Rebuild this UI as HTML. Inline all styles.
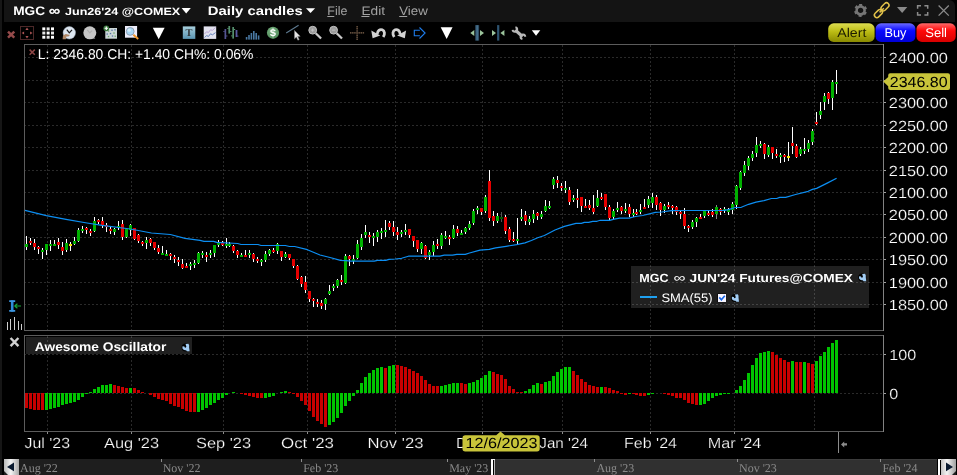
<!DOCTYPE html>
<html><head><meta charset="utf-8"><title>MGC Daily candles</title>
<style>
html,body{margin:0;padding:0;background:#000;}
body{width:957px;height:475px;position:relative;overflow:hidden;font-family:"Liberation Sans",sans-serif;color:#fff;}
#edge{position:absolute;left:0;top:0;width:2px;height:475px;background:#161616}
#title{position:absolute;left:4px;top:0;width:951px;height:22px;background:#141414;border-top-right-radius:6px}
</style></head><body>
<div id="edge"></div>
<div id="title"></div>
<svg width="957" height="475" viewBox="0 0 957 475" style="position:absolute;left:0;top:0" shape-rendering="crispEdges">
<line x1="47.5" y1="45" x2="47.5" y2="330" stroke="#2a2a2a" stroke-dasharray="2 2"/>
<line x1="47.5" y1="336" x2="47.5" y2="431" stroke="#2a2a2a" stroke-dasharray="2 2"/>
<line x1="131.5" y1="45" x2="131.5" y2="330" stroke="#2a2a2a" stroke-dasharray="2 2"/>
<line x1="131.5" y1="336" x2="131.5" y2="431" stroke="#2a2a2a" stroke-dasharray="2 2"/>
<line x1="223.5" y1="45" x2="223.5" y2="330" stroke="#2a2a2a" stroke-dasharray="2 2"/>
<line x1="223.5" y1="336" x2="223.5" y2="431" stroke="#2a2a2a" stroke-dasharray="2 2"/>
<line x1="307.5" y1="45" x2="307.5" y2="330" stroke="#2a2a2a" stroke-dasharray="2 2"/>
<line x1="307.5" y1="336" x2="307.5" y2="431" stroke="#2a2a2a" stroke-dasharray="2 2"/>
<line x1="395.5" y1="45" x2="395.5" y2="330" stroke="#2a2a2a" stroke-dasharray="2 2"/>
<line x1="395.5" y1="336" x2="395.5" y2="431" stroke="#2a2a2a" stroke-dasharray="2 2"/>
<line x1="482.5" y1="45" x2="482.5" y2="330" stroke="#2a2a2a" stroke-dasharray="2 2"/>
<line x1="482.5" y1="336" x2="482.5" y2="431" stroke="#2a2a2a" stroke-dasharray="2 2"/>
<line x1="562.5" y1="45" x2="562.5" y2="330" stroke="#2a2a2a" stroke-dasharray="2 2"/>
<line x1="562.5" y1="336" x2="562.5" y2="431" stroke="#2a2a2a" stroke-dasharray="2 2"/>
<line x1="650.5" y1="45" x2="650.5" y2="330" stroke="#2a2a2a" stroke-dasharray="2 2"/>
<line x1="650.5" y1="336" x2="650.5" y2="431" stroke="#2a2a2a" stroke-dasharray="2 2"/>
<line x1="734.5" y1="45" x2="734.5" y2="330" stroke="#2a2a2a" stroke-dasharray="2 2"/>
<line x1="734.5" y1="336" x2="734.5" y2="431" stroke="#2a2a2a" stroke-dasharray="2 2"/>
<line x1="814.5" y1="45" x2="814.5" y2="330" stroke="#2a2a2a" stroke-dasharray="2 2"/>
<line x1="814.5" y1="336" x2="814.5" y2="431" stroke="#2a2a2a" stroke-dasharray="2 2"/>
<line x1="24" y1="57.5" x2="883" y2="57.5" stroke="#2a2a2a" stroke-dasharray="2 2"/>
<line x1="884" y1="57.5" x2="886" y2="57.5" stroke="#a0a0a0"/>
<line x1="24" y1="80.5" x2="883" y2="80.5" stroke="#2a2a2a" stroke-dasharray="2 2"/>
<line x1="884" y1="80.5" x2="886" y2="80.5" stroke="#a0a0a0"/>
<line x1="24" y1="102.5" x2="883" y2="102.5" stroke="#2a2a2a" stroke-dasharray="2 2"/>
<line x1="884" y1="102.5" x2="886" y2="102.5" stroke="#a0a0a0"/>
<line x1="24" y1="125.5" x2="883" y2="125.5" stroke="#2a2a2a" stroke-dasharray="2 2"/>
<line x1="884" y1="125.5" x2="886" y2="125.5" stroke="#a0a0a0"/>
<line x1="24" y1="147.5" x2="883" y2="147.5" stroke="#2a2a2a" stroke-dasharray="2 2"/>
<line x1="884" y1="147.5" x2="886" y2="147.5" stroke="#a0a0a0"/>
<line x1="24" y1="170.5" x2="883" y2="170.5" stroke="#2a2a2a" stroke-dasharray="2 2"/>
<line x1="884" y1="170.5" x2="886" y2="170.5" stroke="#a0a0a0"/>
<line x1="24" y1="192.5" x2="883" y2="192.5" stroke="#2a2a2a" stroke-dasharray="2 2"/>
<line x1="884" y1="192.5" x2="886" y2="192.5" stroke="#a0a0a0"/>
<line x1="24" y1="214.5" x2="883" y2="214.5" stroke="#2a2a2a" stroke-dasharray="2 2"/>
<line x1="884" y1="214.5" x2="886" y2="214.5" stroke="#a0a0a0"/>
<line x1="24" y1="237.5" x2="883" y2="237.5" stroke="#2a2a2a" stroke-dasharray="2 2"/>
<line x1="884" y1="237.5" x2="886" y2="237.5" stroke="#a0a0a0"/>
<line x1="24" y1="259.5" x2="883" y2="259.5" stroke="#2a2a2a" stroke-dasharray="2 2"/>
<line x1="884" y1="259.5" x2="886" y2="259.5" stroke="#a0a0a0"/>
<line x1="24" y1="282.5" x2="883" y2="282.5" stroke="#2a2a2a" stroke-dasharray="2 2"/>
<line x1="884" y1="282.5" x2="886" y2="282.5" stroke="#a0a0a0"/>
<line x1="24" y1="304.5" x2="883" y2="304.5" stroke="#2a2a2a" stroke-dasharray="2 2"/>
<line x1="884" y1="304.5" x2="886" y2="304.5" stroke="#a0a0a0"/>
<line x1="24" y1="354.5" x2="883" y2="354.5" stroke="#2a2a2a" stroke-dasharray="2 2"/>
<line x1="884" y1="354.5" x2="886" y2="354.5" stroke="#a0a0a0"/>
<line x1="24" y1="393.5" x2="883" y2="393.5" stroke="#2a2a2a" stroke-dasharray="2 2"/>
<line x1="884" y1="393.5" x2="886" y2="393.5" stroke="#a0a0a0"/>
<rect x="26" y="236" width="1" height="14" fill="#fff"/>
<rect x="25" y="244" width="3" height="3" fill="#00b000"/>
<rect x="30" y="238" width="1" height="7" fill="#fff"/>
<rect x="29" y="241" width="3" height="2" fill="#e60000"/>
<rect x="34" y="239" width="1" height="11" fill="#fff"/>
<rect x="33" y="243" width="3" height="4" fill="#e60000"/>
<rect x="38" y="246" width="1" height="8" fill="#fff"/>
<rect x="37" y="247" width="3" height="2" fill="#e60000"/>
<rect x="42" y="248" width="1" height="11" fill="#fff"/>
<rect x="41" y="250" width="3" height="2" fill="#00b000"/>
<rect x="46" y="244" width="1" height="11" fill="#fff"/>
<rect x="45" y="244" width="3" height="6" fill="#00b000"/>
<rect x="50" y="240" width="1" height="11" fill="#fff"/>
<rect x="49" y="244" width="3" height="2" fill="#00b000"/>
<rect x="54" y="240" width="1" height="6" fill="#fff"/>
<rect x="53" y="244" width="3" height="2" fill="#00b000"/>
<rect x="58" y="238" width="1" height="11" fill="#fff"/>
<rect x="57" y="242" width="3" height="3" fill="#e60000"/>
<rect x="62" y="242" width="1" height="13" fill="#fff"/>
<rect x="61" y="247" width="3" height="4" fill="#e60000"/>
<rect x="66" y="239" width="1" height="13" fill="#fff"/>
<rect x="65" y="243" width="3" height="7" fill="#00b000"/>
<rect x="70" y="242" width="1" height="9" fill="#fff"/>
<rect x="69" y="244" width="3" height="2" fill="#f0e000"/>
<rect x="74" y="237" width="1" height="8" fill="#fff"/>
<rect x="73" y="241" width="3" height="3" fill="#00b000"/>
<rect x="78" y="228" width="1" height="14" fill="#fff"/>
<rect x="77" y="230" width="3" height="11" fill="#00b000"/>
<rect x="82" y="226" width="1" height="7" fill="#fff"/>
<rect x="81" y="229" width="3" height="2" fill="#00b000"/>
<rect x="86" y="227" width="1" height="7" fill="#fff"/>
<rect x="85" y="228" width="3" height="2" fill="#e60000"/>
<rect x="90" y="229" width="1" height="7" fill="#fff"/>
<rect x="89" y="231" width="3" height="2" fill="#e60000"/>
<rect x="94" y="217" width="1" height="15" fill="#fff"/>
<rect x="93" y="221" width="3" height="10" fill="#00b000"/>
<rect x="98" y="219" width="1" height="5" fill="#fff"/>
<rect x="97" y="220" width="3" height="2" fill="#e60000"/>
<rect x="102" y="217" width="1" height="11" fill="#fff"/>
<rect x="101" y="221" width="3" height="4" fill="#e60000"/>
<rect x="106" y="223" width="1" height="9" fill="#fff"/>
<rect x="105" y="225" width="3" height="2" fill="#e60000"/>
<rect x="110" y="226" width="1" height="8" fill="#fff"/>
<rect x="109" y="229" width="3" height="2" fill="#e60000"/>
<rect x="114" y="228" width="1" height="7" fill="#fff"/>
<rect x="113" y="229" width="3" height="3" fill="#00b000"/>
<rect x="118" y="221" width="1" height="9" fill="#fff"/>
<rect x="117" y="226" width="3" height="2" fill="#00b000"/>
<rect x="122" y="220" width="1" height="20" fill="#fff"/>
<rect x="121" y="224" width="3" height="13" fill="#e60000"/>
<rect x="126" y="229" width="1" height="9" fill="#fff"/>
<rect x="125" y="229" width="3" height="8" fill="#00b000"/>
<rect x="130" y="224" width="1" height="12" fill="#fff"/>
<rect x="129" y="225" width="3" height="5" fill="#00b000"/>
<rect x="134" y="228" width="1" height="12" fill="#fff"/>
<rect x="133" y="228" width="3" height="11" fill="#e60000"/>
<rect x="138" y="234" width="1" height="9" fill="#fff"/>
<rect x="137" y="235" width="3" height="6" fill="#e60000"/>
<rect x="142" y="241" width="1" height="5" fill="#fff"/>
<rect x="141" y="242" width="3" height="2" fill="#e60000"/>
<rect x="146" y="237" width="1" height="12" fill="#fff"/>
<rect x="145" y="240" width="3" height="3" fill="#00b000"/>
<rect x="150" y="238" width="1" height="8" fill="#fff"/>
<rect x="149" y="239" width="3" height="4" fill="#e60000"/>
<rect x="154" y="242" width="1" height="8" fill="#fff"/>
<rect x="153" y="242" width="3" height="6" fill="#e60000"/>
<rect x="158" y="245" width="1" height="9" fill="#fff"/>
<rect x="157" y="248" width="3" height="4" fill="#e60000"/>
<rect x="162" y="246" width="1" height="9" fill="#fff"/>
<rect x="161" y="253" width="3" height="2" fill="#00b000"/>
<rect x="166" y="250" width="1" height="6" fill="#fff"/>
<rect x="165" y="254" width="3" height="2" fill="#00b000"/>
<rect x="170" y="253" width="1" height="7" fill="#fff"/>
<rect x="169" y="254" width="3" height="2" fill="#e60000"/>
<rect x="174" y="255" width="1" height="8" fill="#fff"/>
<rect x="173" y="257" width="3" height="2" fill="#e60000"/>
<rect x="178" y="257" width="1" height="9" fill="#fff"/>
<rect x="177" y="260" width="3" height="2" fill="#e60000"/>
<rect x="182" y="259" width="1" height="10" fill="#fff"/>
<rect x="181" y="264" width="3" height="4" fill="#e60000"/>
<rect x="186" y="263" width="1" height="5" fill="#fff"/>
<rect x="185" y="266" width="3" height="2" fill="#e60000"/>
<rect x="190" y="262" width="1" height="8" fill="#fff"/>
<rect x="189" y="264" width="3" height="2" fill="#00b000"/>
<rect x="194" y="260" width="1" height="8" fill="#fff"/>
<rect x="193" y="263" width="3" height="2" fill="#00b000"/>
<rect x="198" y="252" width="1" height="12" fill="#fff"/>
<rect x="197" y="253" width="3" height="10" fill="#00b000"/>
<rect x="202" y="251" width="1" height="7" fill="#fff"/>
<rect x="201" y="253" width="3" height="2" fill="#00b000"/>
<rect x="206" y="252" width="1" height="10" fill="#fff"/>
<rect x="205" y="255" width="3" height="2" fill="#e60000"/>
<rect x="210" y="250" width="1" height="8" fill="#fff"/>
<rect x="209" y="253" width="3" height="2" fill="#00b000"/>
<rect x="214" y="245" width="1" height="12" fill="#fff"/>
<rect x="213" y="245" width="3" height="8" fill="#00b000"/>
<rect x="218" y="240" width="1" height="7" fill="#fff"/>
<rect x="217" y="243" width="3" height="2" fill="#00b000"/>
<rect x="222" y="241" width="1" height="5" fill="#fff"/>
<rect x="221" y="243" width="3" height="2" fill="#e60000"/>
<rect x="226" y="238" width="1" height="10" fill="#fff"/>
<rect x="225" y="244" width="3" height="2" fill="#00b000"/>
<rect x="229" y="242" width="1" height="5" fill="#fff"/>
<rect x="228" y="244" width="3" height="2" fill="#00b000"/>
<rect x="233" y="245" width="1" height="8" fill="#fff"/>
<rect x="232" y="246" width="3" height="5" fill="#e60000"/>
<rect x="237" y="250" width="1" height="8" fill="#fff"/>
<rect x="236" y="251" width="3" height="4" fill="#e60000"/>
<rect x="241" y="253" width="1" height="4" fill="#fff"/>
<rect x="240" y="255" width="3" height="2" fill="#00b000"/>
<rect x="245" y="250" width="1" height="7" fill="#fff"/>
<rect x="244" y="255" width="3" height="2" fill="#e60000"/>
<rect x="249" y="250" width="1" height="8" fill="#fff"/>
<rect x="248" y="253" width="3" height="2" fill="#00b000"/>
<rect x="253" y="253" width="1" height="9" fill="#fff"/>
<rect x="252" y="254" width="3" height="5" fill="#e60000"/>
<rect x="257" y="257" width="1" height="6" fill="#fff"/>
<rect x="256" y="259" width="3" height="2" fill="#e60000"/>
<rect x="261" y="259" width="1" height="7" fill="#fff"/>
<rect x="260" y="260" width="3" height="2" fill="#00b000"/>
<rect x="265" y="251" width="1" height="11" fill="#fff"/>
<rect x="264" y="254" width="3" height="6" fill="#00b000"/>
<rect x="269" y="249" width="1" height="7" fill="#fff"/>
<rect x="268" y="250" width="3" height="4" fill="#00b000"/>
<rect x="273" y="248" width="1" height="5" fill="#fff"/>
<rect x="272" y="250" width="3" height="2" fill="#e60000"/>
<rect x="277" y="243" width="1" height="11" fill="#fff"/>
<rect x="276" y="244" width="3" height="7" fill="#00b000"/>
<rect x="281" y="251" width="1" height="10" fill="#fff"/>
<rect x="280" y="251" width="3" height="6" fill="#e60000"/>
<rect x="285" y="252" width="1" height="6" fill="#fff"/>
<rect x="284" y="254" width="3" height="3" fill="#00b000"/>
<rect x="289" y="254" width="1" height="6" fill="#fff"/>
<rect x="288" y="254" width="3" height="4" fill="#e60000"/>
<rect x="293" y="259" width="1" height="9" fill="#fff"/>
<rect x="292" y="259" width="3" height="7" fill="#e60000"/>
<rect x="297" y="265" width="1" height="15" fill="#fff"/>
<rect x="296" y="266" width="3" height="13" fill="#e60000"/>
<rect x="301" y="276" width="1" height="11" fill="#fff"/>
<rect x="300" y="277" width="3" height="7" fill="#e60000"/>
<rect x="305" y="276" width="1" height="17" fill="#fff"/>
<rect x="304" y="282" width="3" height="8" fill="#e60000"/>
<rect x="309" y="291" width="1" height="11" fill="#fff"/>
<rect x="308" y="291" width="3" height="8" fill="#e60000"/>
<rect x="313" y="298" width="1" height="9" fill="#fff"/>
<rect x="312" y="299" width="3" height="2" fill="#e60000"/>
<rect x="317" y="299" width="1" height="8" fill="#fff"/>
<rect x="316" y="302" width="3" height="2" fill="#e60000"/>
<rect x="321" y="300" width="1" height="9" fill="#fff"/>
<rect x="320" y="303" width="3" height="3" fill="#e60000"/>
<rect x="325" y="298" width="1" height="12" fill="#fff"/>
<rect x="324" y="299" width="3" height="5" fill="#00b000"/>
<rect x="329" y="285" width="1" height="10" fill="#fff"/>
<rect x="328" y="291" width="3" height="3" fill="#00b000"/>
<rect x="333" y="284" width="1" height="7" fill="#fff"/>
<rect x="332" y="286" width="3" height="2" fill="#00b000"/>
<rect x="337" y="279" width="1" height="9" fill="#fff"/>
<rect x="336" y="280" width="3" height="6" fill="#00b000"/>
<rect x="341" y="275" width="1" height="10" fill="#fff"/>
<rect x="340" y="280" width="3" height="2" fill="#e60000"/>
<rect x="345" y="254" width="1" height="30" fill="#fff"/>
<rect x="344" y="256" width="3" height="27" fill="#00b000"/>
<rect x="349" y="255" width="1" height="11" fill="#fff"/>
<rect x="348" y="256" width="3" height="3" fill="#e60000"/>
<rect x="353" y="255" width="1" height="9" fill="#fff"/>
<rect x="352" y="259" width="3" height="2" fill="#00b000"/>
<rect x="357" y="240" width="1" height="19" fill="#fff"/>
<rect x="356" y="244" width="3" height="14" fill="#00b000"/>
<rect x="361" y="234" width="1" height="16" fill="#fff"/>
<rect x="360" y="238" width="3" height="9" fill="#00b000"/>
<rect x="365" y="225" width="1" height="13" fill="#fff"/>
<rect x="364" y="232" width="3" height="3" fill="#00b000"/>
<rect x="369" y="232" width="1" height="11" fill="#fff"/>
<rect x="368" y="235" width="3" height="2" fill="#e60000"/>
<rect x="373" y="233" width="1" height="13" fill="#fff"/>
<rect x="372" y="236" width="3" height="2" fill="#00b000"/>
<rect x="377" y="230" width="1" height="12" fill="#fff"/>
<rect x="376" y="232" width="3" height="5" fill="#00b000"/>
<rect x="381" y="228" width="1" height="11" fill="#fff"/>
<rect x="380" y="231" width="3" height="2" fill="#00b000"/>
<rect x="385" y="220" width="1" height="17" fill="#fff"/>
<rect x="384" y="230" width="3" height="2" fill="#00b000"/>
<rect x="389" y="221" width="1" height="9" fill="#fff"/>
<rect x="388" y="223" width="3" height="4" fill="#e60000"/>
<rect x="393" y="221" width="1" height="15" fill="#fff"/>
<rect x="392" y="227" width="3" height="5" fill="#e60000"/>
<rect x="397" y="227" width="1" height="13" fill="#fff"/>
<rect x="396" y="232" width="3" height="3" fill="#e60000"/>
<rect x="401" y="230" width="1" height="7" fill="#fff"/>
<rect x="400" y="232" width="3" height="2" fill="#00b000"/>
<rect x="405" y="224" width="1" height="11" fill="#fff"/>
<rect x="404" y="230" width="3" height="2" fill="#00b000"/>
<rect x="409" y="229" width="1" height="9" fill="#fff"/>
<rect x="408" y="229" width="3" height="6" fill="#e60000"/>
<rect x="413" y="236" width="1" height="11" fill="#fff"/>
<rect x="412" y="236" width="3" height="5" fill="#e60000"/>
<rect x="417" y="240" width="1" height="12" fill="#fff"/>
<rect x="416" y="240" width="3" height="9" fill="#e60000"/>
<rect x="421" y="242" width="1" height="12" fill="#fff"/>
<rect x="420" y="243" width="3" height="6" fill="#00b000"/>
<rect x="425" y="245" width="1" height="14" fill="#fff"/>
<rect x="424" y="246" width="3" height="12" fill="#e60000"/>
<rect x="429" y="250" width="1" height="10" fill="#fff"/>
<rect x="428" y="252" width="3" height="3" fill="#00b000"/>
<rect x="433" y="241" width="1" height="15" fill="#fff"/>
<rect x="432" y="245" width="3" height="7" fill="#00b000"/>
<rect x="437" y="239" width="1" height="10" fill="#fff"/>
<rect x="436" y="244" width="3" height="2" fill="#e60000"/>
<rect x="441" y="233" width="1" height="16" fill="#fff"/>
<rect x="440" y="235" width="3" height="11" fill="#00b000"/>
<rect x="445" y="231" width="1" height="8" fill="#fff"/>
<rect x="444" y="236" width="3" height="2" fill="#00b000"/>
<rect x="449" y="235" width="1" height="10" fill="#fff"/>
<rect x="448" y="237" width="3" height="2" fill="#e60000"/>
<rect x="453" y="225" width="1" height="14" fill="#fff"/>
<rect x="452" y="229" width="3" height="9" fill="#00b000"/>
<rect x="457" y="226" width="1" height="10" fill="#fff"/>
<rect x="456" y="229" width="3" height="4" fill="#e60000"/>
<rect x="461" y="230" width="1" height="5" fill="#fff"/>
<rect x="460" y="233" width="3" height="2" fill="#00b000"/>
<rect x="465" y="227" width="1" height="7" fill="#fff"/>
<rect x="464" y="228" width="3" height="4" fill="#00b000"/>
<rect x="469" y="221" width="1" height="9" fill="#fff"/>
<rect x="468" y="224" width="3" height="4" fill="#00b000"/>
<rect x="473" y="209" width="1" height="16" fill="#fff"/>
<rect x="472" y="211" width="3" height="12" fill="#00b000"/>
<rect x="477" y="206" width="1" height="8" fill="#fff"/>
<rect x="476" y="208" width="3" height="2" fill="#00b000"/>
<rect x="481" y="208" width="1" height="7" fill="#fff"/>
<rect x="480" y="208" width="3" height="4" fill="#e60000"/>
<rect x="485" y="195" width="1" height="18" fill="#fff"/>
<rect x="484" y="197" width="3" height="14" fill="#00b000"/>
<rect x="489" y="170" width="1" height="51" fill="#fff"/>
<rect x="488" y="181" width="3" height="37" fill="#e60000"/>
<rect x="493" y="211" width="1" height="15" fill="#fff"/>
<rect x="492" y="216" width="3" height="5" fill="#e60000"/>
<rect x="497" y="213" width="1" height="10" fill="#fff"/>
<rect x="496" y="216" width="3" height="5" fill="#00b000"/>
<rect x="501" y="212" width="1" height="10" fill="#555"/>
<rect x="500" y="217" width="3" height="2" fill="#005a00"/>
<rect x="505" y="215" width="1" height="19" fill="#fff"/>
<rect x="504" y="217" width="3" height="14" fill="#e60000"/>
<rect x="509" y="227" width="1" height="15" fill="#fff"/>
<rect x="508" y="229" width="3" height="11" fill="#e60000"/>
<rect x="513" y="232" width="1" height="10" fill="#fff"/>
<rect x="512" y="239" width="3" height="2" fill="#e60000"/>
<rect x="517" y="218" width="1" height="26" fill="#fff"/>
<rect x="516" y="239" width="3" height="2" fill="#00b000"/>
<rect x="521" y="209" width="1" height="12" fill="#fff"/>
<rect x="520" y="217" width="3" height="2" fill="#00b000"/>
<rect x="525" y="211" width="1" height="14" fill="#fff"/>
<rect x="524" y="215" width="3" height="6" fill="#e60000"/>
<rect x="529" y="216" width="1" height="9" fill="#fff"/>
<rect x="528" y="219" width="3" height="3" fill="#00b000"/>
<rect x="533" y="210" width="1" height="13" fill="#fff"/>
<rect x="532" y="214" width="3" height="5" fill="#00b000"/>
<rect x="537" y="212" width="1" height="8" fill="#fff"/>
<rect x="536" y="213" width="3" height="3" fill="#e60000"/>
<rect x="541" y="211" width="1" height="8" fill="#fff"/>
<rect x="540" y="214" width="3" height="3" fill="#00b000"/>
<rect x="545" y="200" width="1" height="12" fill="#fff"/>
<rect x="544" y="206" width="3" height="5" fill="#00b000"/>
<rect x="549" y="201" width="1" height="8" fill="#fff"/>
<rect x="548" y="206" width="3" height="2" fill="#00b000"/>
<rect x="553" y="177" width="1" height="12" fill="#fff"/>
<rect x="552" y="179" width="3" height="6" fill="#00b000"/>
<rect x="557" y="176" width="1" height="12" fill="#fff"/>
<rect x="556" y="180" width="3" height="3" fill="#e60000"/>
<rect x="561" y="183" width="1" height="8" fill="#fff"/>
<rect x="560" y="186" width="3" height="2" fill="#e60000"/>
<rect x="565" y="181" width="1" height="12" fill="#fff"/>
<rect x="564" y="188" width="3" height="2" fill="#00b000"/>
<rect x="569" y="187" width="1" height="18" fill="#fff"/>
<rect x="568" y="190" width="3" height="12" fill="#e60000"/>
<rect x="573" y="195" width="1" height="7" fill="#fff"/>
<rect x="572" y="198" width="3" height="2" fill="#00b000"/>
<rect x="577" y="189" width="1" height="19" fill="#fff"/>
<rect x="576" y="198" width="3" height="2" fill="#e60000"/>
<rect x="581" y="197" width="1" height="15" fill="#fff"/>
<rect x="580" y="197" width="3" height="9" fill="#e60000"/>
<rect x="585" y="199" width="1" height="9" fill="#fff"/>
<rect x="584" y="206" width="3" height="2" fill="#e60000"/>
<rect x="589" y="200" width="1" height="10" fill="#fff"/>
<rect x="588" y="205" width="3" height="3" fill="#e60000"/>
<rect x="593" y="195" width="1" height="19" fill="#fff"/>
<rect x="592" y="208" width="3" height="4" fill="#e60000"/>
<rect x="597" y="190" width="1" height="17" fill="#fff"/>
<rect x="596" y="198" width="3" height="8" fill="#00b000"/>
<rect x="601" y="193" width="1" height="7" fill="#fff"/>
<rect x="600" y="197" width="3" height="2" fill="#e60000"/>
<rect x="605" y="194" width="1" height="16" fill="#fff"/>
<rect x="604" y="194" width="3" height="13" fill="#e60000"/>
<rect x="609" y="205" width="1" height="15" fill="#fff"/>
<rect x="608" y="207" width="3" height="11" fill="#e60000"/>
<rect x="613" y="209" width="1" height="10" fill="#fff"/>
<rect x="612" y="211" width="3" height="6" fill="#00b000"/>
<rect x="617" y="202" width="1" height="10" fill="#fff"/>
<rect x="616" y="208" width="3" height="2" fill="#00b000"/>
<rect x="621" y="206" width="1" height="8" fill="#fff"/>
<rect x="620" y="207" width="3" height="4" fill="#e60000"/>
<rect x="625" y="203" width="1" height="10" fill="#fff"/>
<rect x="624" y="209" width="3" height="2" fill="#00b000"/>
<rect x="629" y="204" width="1" height="13" fill="#fff"/>
<rect x="628" y="207" width="3" height="7" fill="#e60000"/>
<rect x="633" y="209" width="1" height="8" fill="#fff"/>
<rect x="632" y="213" width="3" height="2" fill="#00b000"/>
<rect x="636" y="209" width="1" height="6" fill="#fff"/>
<rect x="635" y="212" width="3" height="2" fill="#e60000"/>
<rect x="640" y="204" width="1" height="10" fill="#fff"/>
<rect x="639" y="210" width="3" height="2" fill="#00b000"/>
<rect x="644" y="199" width="1" height="10" fill="#fff"/>
<rect x="643" y="207" width="3" height="2" fill="#e60000"/>
<rect x="648" y="196" width="1" height="12" fill="#fff"/>
<rect x="647" y="199" width="3" height="6" fill="#00b000"/>
<rect x="652" y="193" width="1" height="15" fill="#fff"/>
<rect x="651" y="197" width="3" height="6" fill="#00b000"/>
<rect x="656" y="195" width="1" height="15" fill="#fff"/>
<rect x="655" y="197" width="3" height="8" fill="#e60000"/>
<rect x="660" y="202" width="1" height="14" fill="#fff"/>
<rect x="659" y="203" width="3" height="7" fill="#e60000"/>
<rect x="664" y="204" width="1" height="9" fill="#fff"/>
<rect x="663" y="206" width="3" height="4" fill="#00b000"/>
<rect x="668" y="202" width="1" height="7" fill="#fff"/>
<rect x="667" y="205" width="3" height="2" fill="#e60000"/>
<rect x="672" y="205" width="1" height="9" fill="#fff"/>
<rect x="671" y="206" width="3" height="2" fill="#e60000"/>
<rect x="676" y="206" width="1" height="9" fill="#fff"/>
<rect x="675" y="207" width="3" height="5" fill="#e60000"/>
<rect x="680" y="211" width="1" height="8" fill="#fff"/>
<rect x="679" y="212" width="3" height="2" fill="#e60000"/>
<rect x="684" y="208" width="1" height="21" fill="#fff"/>
<rect x="683" y="214" width="3" height="12" fill="#e60000"/>
<rect x="688" y="225" width="1" height="7" fill="#fff"/>
<rect x="687" y="226" width="3" height="2" fill="#e60000"/>
<rect x="692" y="220" width="1" height="9" fill="#fff"/>
<rect x="691" y="222" width="3" height="5" fill="#00b000"/>
<rect x="696" y="217" width="1" height="10" fill="#fff"/>
<rect x="695" y="218" width="3" height="4" fill="#00b000"/>
<rect x="700" y="214" width="1" height="5" fill="#fff"/>
<rect x="699" y="217" width="3" height="2" fill="#e60000"/>
<rect x="704" y="211" width="1" height="7" fill="#fff"/>
<rect x="703" y="211" width="3" height="5" fill="#00b000"/>
<rect x="708" y="211" width="1" height="5" fill="#fff"/>
<rect x="707" y="213" width="3" height="2" fill="#e60000"/>
<rect x="712" y="209" width="1" height="8" fill="#fff"/>
<rect x="711" y="212" width="3" height="3" fill="#e60000"/>
<rect x="716" y="205" width="1" height="14" fill="#888"/>
<rect x="715" y="207" width="3" height="7" fill="#00b000"/>
<rect x="720" y="208" width="1" height="7" fill="#fff"/>
<rect x="719" y="209" width="3" height="3" fill="#e60000"/>
<rect x="724" y="207" width="1" height="6" fill="#fff"/>
<rect x="723" y="209" width="3" height="2" fill="#00b000"/>
<rect x="728" y="208" width="1" height="7" fill="#fff"/>
<rect x="727" y="209" width="3" height="3" fill="#00b000"/>
<rect x="732" y="202" width="1" height="12" fill="#fff"/>
<rect x="731" y="204" width="3" height="6" fill="#00b000"/>
<rect x="736" y="185" width="1" height="24" fill="#fff"/>
<rect x="735" y="186" width="3" height="19" fill="#00b000"/>
<rect x="740" y="171" width="1" height="19" fill="#fff"/>
<rect x="739" y="172" width="3" height="16" fill="#00b000"/>
<rect x="744" y="161" width="1" height="15" fill="#fff"/>
<rect x="743" y="165" width="3" height="8" fill="#00b000"/>
<rect x="748" y="156" width="1" height="14" fill="#fff"/>
<rect x="747" y="158" width="3" height="8" fill="#00b000"/>
<rect x="752" y="151" width="1" height="10" fill="#fff"/>
<rect x="751" y="154" width="3" height="4" fill="#00b000"/>
<rect x="756" y="137" width="1" height="20" fill="#fff"/>
<rect x="755" y="145" width="3" height="8" fill="#00b000"/>
<rect x="760" y="141" width="1" height="7" fill="#fff"/>
<rect x="759" y="144" width="3" height="2" fill="#00b000"/>
<rect x="764" y="143" width="1" height="16" fill="#fff"/>
<rect x="763" y="144" width="3" height="10" fill="#e60000"/>
<rect x="768" y="145" width="1" height="12" fill="#fff"/>
<rect x="767" y="147" width="3" height="8" fill="#00b000"/>
<rect x="772" y="147" width="1" height="12" fill="#fff"/>
<rect x="771" y="147" width="3" height="6" fill="#e60000"/>
<rect x="776" y="149" width="1" height="9" fill="#fff"/>
<rect x="775" y="154" width="3" height="2" fill="#e60000"/>
<rect x="780" y="153" width="1" height="10" fill="#fff"/>
<rect x="779" y="155" width="3" height="2" fill="#00b000"/>
<rect x="784" y="154" width="1" height="8" fill="#fff"/>
<rect x="783" y="155" width="3" height="2" fill="#e60000"/>
<rect x="788" y="142" width="1" height="19" fill="#fff"/>
<rect x="787" y="156" width="3" height="2" fill="#f0e000"/>
<rect x="792" y="127" width="1" height="27" fill="#fff"/>
<rect x="791" y="143" width="3" height="3" fill="#e60000"/>
<rect x="796" y="144" width="1" height="14" fill="#fff"/>
<rect x="795" y="146" width="3" height="11" fill="#e60000"/>
<rect x="800" y="147" width="1" height="9" fill="#fff"/>
<rect x="799" y="149" width="3" height="5" fill="#00b000"/>
<rect x="804" y="138" width="1" height="16" fill="#fff"/>
<rect x="803" y="149" width="3" height="2" fill="#00b000"/>
<rect x="808" y="140" width="1" height="12" fill="#fff"/>
<rect x="807" y="143" width="3" height="6" fill="#00b000"/>
<rect x="812" y="129" width="1" height="16" fill="#fff"/>
<rect x="811" y="131" width="3" height="11" fill="#00b000"/>
<rect x="816" y="112" width="1" height="13" fill="#fff"/>
<rect x="815" y="122" width="3" height="2" fill="#e60000"/>
<rect x="820" y="102" width="1" height="17" fill="#fff"/>
<rect x="819" y="111" width="3" height="4" fill="#00b000"/>
<rect x="824" y="93" width="1" height="17" fill="#fff"/>
<rect x="823" y="96" width="3" height="6" fill="#00b000"/>
<rect x="828" y="92" width="1" height="12" fill="#fff"/>
<rect x="827" y="93" width="3" height="6" fill="#e60000"/>
<rect x="832" y="80" width="1" height="30" fill="#fff"/>
<rect x="831" y="82" width="3" height="16" fill="#00b000"/>
<rect x="836" y="70" width="1" height="24" fill="#fff"/>
<rect x="835" y="82" width="3" height="2" fill="#00b000"/>
<polyline points="24.0,210.1 46.3,215.6 66.0,219.4 87.0,223.0 102.0,225.4 130.3,229.0 151.4,233.0 170.3,234.5 185.0,238.3 200.0,240.4 204.0,241.3 213.5,241.4 216.8,242.4 237.7,243.5 241.1,244.5 258.0,244.5 261.0,245.5 285.3,245.5 289.5,246.5 294.7,246.5 307.4,249.7 320.0,255.0 330.0,257.5 340.5,260.4 345.8,260.6 351.0,261.2 374.2,261.2 377.4,260.4 385.8,260.4 389.0,259.4 395.3,259.0 401.6,258.3 408.4,256.2 440.0,256.2 444.2,255.2 452.6,255.2 456.8,254.4 465.3,254.4 469.5,253.0 480.0,250.1 489.3,249.3 495.6,247.9 506.1,246.3 516.6,244.7 525.0,242.9 531.4,240.5 537.7,237.7 544.4,235.5 555.0,230.0 564.4,226.4 576.0,223.4 581.3,223.4 584.4,222.4 588.6,222.4 592.8,221.3 597.0,221.3 600.2,220.3 609.7,220.3 614.3,219.2 619.6,218.1 629.0,218.1 635.4,216.5 642.7,215.5 655.4,212.3 661.7,212.0 671.2,210.7 688.0,210.5 724.4,210.4 728.6,209.6 735.0,207.5 741.3,207.3 748.6,204.3 756.0,202.2 764.0,200.6 771.4,198.5 776.6,198.5 779.8,197.4 785.6,197.4 795.6,194.5 808.2,191.3 812.4,189.4 816.6,188.4 827.2,183.1 836.6,178.2" fill="none" stroke="#0c8ef2" stroke-width="1.2" shape-rendering="auto" stroke-linejoin="round"/>
<rect x="25" y="393" width="3" height="15" fill="#c80000"/>
<rect x="29" y="393" width="3" height="16" fill="#c80000"/>
<rect x="33" y="393" width="3" height="17" fill="#c80000"/>
<rect x="37" y="393" width="3" height="17" fill="#c80000"/>
<rect x="41" y="393" width="3" height="17" fill="#c80000"/>
<rect x="45" y="393" width="3" height="17" fill="#00c400"/>
<rect x="49" y="393" width="3" height="16" fill="#00c400"/>
<rect x="53" y="393" width="3" height="15" fill="#00c400"/>
<rect x="57" y="393" width="3" height="14" fill="#00c400"/>
<rect x="61" y="393" width="3" height="12" fill="#00c400"/>
<rect x="65" y="393" width="3" height="11" fill="#00c400"/>
<rect x="69" y="393" width="3" height="10" fill="#00c400"/>
<rect x="73" y="393" width="3" height="9" fill="#00c400"/>
<rect x="77" y="393" width="3" height="7" fill="#00c400"/>
<rect x="81" y="393" width="3" height="4" fill="#00c400"/>
<rect x="85" y="393" width="3" height="1" fill="#00c400"/>
<rect x="89" y="392" width="3" height="1" fill="#00c400"/>
<rect x="93" y="389" width="3" height="4" fill="#00c400"/>
<rect x="97" y="387" width="3" height="6" fill="#00c400"/>
<rect x="101" y="385" width="3" height="8" fill="#00c400"/>
<rect x="105" y="385" width="3" height="8" fill="#00c400"/>
<rect x="109" y="384" width="3" height="9" fill="#00c400"/>
<rect x="113" y="385" width="3" height="8" fill="#c80000"/>
<rect x="117" y="386" width="3" height="7" fill="#c80000"/>
<rect x="121" y="387" width="3" height="6" fill="#c80000"/>
<rect x="125" y="388" width="3" height="5" fill="#c80000"/>
<rect x="129" y="388" width="3" height="5" fill="#00c400"/>
<rect x="133" y="388" width="3" height="5" fill="#c80000"/>
<rect x="137" y="390" width="3" height="3" fill="#c80000"/>
<rect x="141" y="392" width="3" height="1" fill="#c80000"/>
<rect x="149" y="393" width="3" height="2" fill="#c80000"/>
<rect x="153" y="393" width="3" height="4" fill="#c80000"/>
<rect x="157" y="393" width="3" height="6" fill="#c80000"/>
<rect x="161" y="393" width="3" height="7" fill="#c80000"/>
<rect x="165" y="393" width="3" height="8" fill="#c80000"/>
<rect x="169" y="393" width="3" height="11" fill="#c80000"/>
<rect x="173" y="393" width="3" height="13" fill="#c80000"/>
<rect x="177" y="393" width="3" height="14" fill="#c80000"/>
<rect x="181" y="393" width="3" height="16" fill="#c80000"/>
<rect x="185" y="393" width="3" height="18" fill="#c80000"/>
<rect x="189" y="393" width="3" height="19" fill="#c80000"/>
<rect x="193" y="393" width="3" height="19" fill="#c80000"/>
<rect x="197" y="393" width="3" height="19" fill="#00c400"/>
<rect x="201" y="393" width="3" height="17" fill="#00c400"/>
<rect x="205" y="393" width="3" height="15" fill="#00c400"/>
<rect x="209" y="393" width="3" height="12" fill="#00c400"/>
<rect x="213" y="393" width="3" height="10" fill="#00c400"/>
<rect x="217" y="393" width="3" height="7" fill="#00c400"/>
<rect x="221" y="393" width="3" height="5" fill="#00c400"/>
<rect x="225" y="393" width="3" height="2" fill="#00c400"/>
<rect x="232" y="392" width="3" height="1" fill="#00c400"/>
<rect x="240" y="393" width="3" height="1" fill="#c80000"/>
<rect x="244" y="393" width="3" height="2" fill="#c80000"/>
<rect x="248" y="393" width="3" height="3" fill="#c80000"/>
<rect x="252" y="393" width="3" height="4" fill="#c80000"/>
<rect x="256" y="393" width="3" height="5" fill="#c80000"/>
<rect x="260" y="393" width="3" height="5" fill="#c80000"/>
<rect x="264" y="393" width="3" height="5" fill="#00c400"/>
<rect x="268" y="393" width="3" height="4" fill="#00c400"/>
<rect x="272" y="393" width="3" height="3" fill="#00c400"/>
<rect x="280" y="392" width="3" height="1" fill="#00c400"/>
<rect x="284" y="391" width="3" height="2" fill="#00c400"/>
<rect x="288" y="392" width="3" height="1" fill="#c80000"/>
<rect x="292" y="393" width="3" height="1" fill="#c80000"/>
<rect x="296" y="393" width="3" height="4" fill="#c80000"/>
<rect x="300" y="393" width="3" height="8" fill="#c80000"/>
<rect x="304" y="393" width="3" height="12" fill="#c80000"/>
<rect x="308" y="393" width="3" height="18" fill="#c80000"/>
<rect x="312" y="393" width="3" height="24" fill="#c80000"/>
<rect x="316" y="393" width="3" height="28" fill="#c80000"/>
<rect x="320" y="393" width="3" height="31" fill="#c80000"/>
<rect x="324" y="393" width="3" height="34" fill="#c80000"/>
<rect x="328" y="393" width="3" height="32" fill="#00c400"/>
<rect x="332" y="393" width="3" height="29" fill="#00c400"/>
<rect x="336" y="393" width="3" height="25" fill="#00c400"/>
<rect x="340" y="393" width="3" height="20" fill="#00c400"/>
<rect x="344" y="393" width="3" height="13" fill="#00c400"/>
<rect x="348" y="393" width="3" height="8" fill="#00c400"/>
<rect x="352" y="393" width="3" height="3" fill="#00c400"/>
<rect x="356" y="390" width="3" height="3" fill="#00c400"/>
<rect x="360" y="383" width="3" height="10" fill="#00c400"/>
<rect x="364" y="377" width="3" height="16" fill="#00c400"/>
<rect x="368" y="373" width="3" height="20" fill="#00c400"/>
<rect x="372" y="370" width="3" height="23" fill="#00c400"/>
<rect x="376" y="368" width="3" height="25" fill="#00c400"/>
<rect x="380" y="367" width="3" height="26" fill="#00c400"/>
<rect x="384" y="368" width="3" height="25" fill="#c80000"/>
<rect x="388" y="366" width="3" height="27" fill="#00c400"/>
<rect x="392" y="365" width="3" height="28" fill="#00c400"/>
<rect x="396" y="365" width="3" height="28" fill="#c80000"/>
<rect x="400" y="366" width="3" height="27" fill="#c80000"/>
<rect x="404" y="367" width="3" height="26" fill="#c80000"/>
<rect x="408" y="369" width="3" height="24" fill="#c80000"/>
<rect x="412" y="371" width="3" height="22" fill="#c80000"/>
<rect x="416" y="373" width="3" height="20" fill="#c80000"/>
<rect x="420" y="376" width="3" height="17" fill="#c80000"/>
<rect x="424" y="380" width="3" height="13" fill="#c80000"/>
<rect x="428" y="384" width="3" height="9" fill="#c80000"/>
<rect x="432" y="386" width="3" height="7" fill="#c80000"/>
<rect x="436" y="386" width="3" height="7" fill="#c80000"/>
<rect x="440" y="386" width="3" height="7" fill="#00c400"/>
<rect x="444" y="385" width="3" height="8" fill="#00c400"/>
<rect x="448" y="384" width="3" height="9" fill="#00c400"/>
<rect x="452" y="383" width="3" height="10" fill="#00c400"/>
<rect x="456" y="383" width="3" height="10" fill="#00c400"/>
<rect x="460" y="383" width="3" height="10" fill="#c80000"/>
<rect x="464" y="384" width="3" height="9" fill="#c80000"/>
<rect x="468" y="383" width="3" height="10" fill="#00c400"/>
<rect x="472" y="382" width="3" height="11" fill="#00c400"/>
<rect x="476" y="380" width="3" height="13" fill="#00c400"/>
<rect x="480" y="378" width="3" height="15" fill="#00c400"/>
<rect x="484" y="375" width="3" height="18" fill="#00c400"/>
<rect x="488" y="371" width="3" height="22" fill="#00c400"/>
<rect x="492" y="372" width="3" height="21" fill="#c80000"/>
<rect x="496" y="374" width="3" height="19" fill="#c80000"/>
<rect x="500" y="375" width="3" height="18" fill="#c80000"/>
<rect x="504" y="379" width="3" height="14" fill="#c80000"/>
<rect x="508" y="386" width="3" height="7" fill="#c80000"/>
<rect x="512" y="389" width="3" height="4" fill="#c80000"/>
<rect x="516" y="392" width="3" height="1" fill="#c80000"/>
<rect x="520" y="392" width="3" height="1" fill="#c80000"/>
<rect x="524" y="391" width="3" height="2" fill="#00c400"/>
<rect x="528" y="389" width="3" height="4" fill="#00c400"/>
<rect x="532" y="385" width="3" height="8" fill="#00c400"/>
<rect x="536" y="383" width="3" height="10" fill="#00c400"/>
<rect x="540" y="384" width="3" height="9" fill="#c80000"/>
<rect x="544" y="382" width="3" height="11" fill="#00c400"/>
<rect x="548" y="381" width="3" height="12" fill="#00c400"/>
<rect x="552" y="376" width="3" height="17" fill="#00c400"/>
<rect x="556" y="372" width="3" height="21" fill="#00c400"/>
<rect x="560" y="369" width="3" height="24" fill="#00c400"/>
<rect x="564" y="367" width="3" height="26" fill="#00c400"/>
<rect x="568" y="367" width="3" height="26" fill="#00c400"/>
<rect x="572" y="371" width="3" height="22" fill="#c80000"/>
<rect x="576" y="375" width="3" height="18" fill="#c80000"/>
<rect x="580" y="379" width="3" height="14" fill="#c80000"/>
<rect x="584" y="382" width="3" height="11" fill="#c80000"/>
<rect x="588" y="385" width="3" height="8" fill="#c80000"/>
<rect x="592" y="386" width="3" height="7" fill="#c80000"/>
<rect x="596" y="387" width="3" height="6" fill="#c80000"/>
<rect x="600" y="387" width="3" height="6" fill="#00c400"/>
<rect x="604" y="387" width="3" height="6" fill="#c80000"/>
<rect x="608" y="388" width="3" height="5" fill="#c80000"/>
<rect x="612" y="390" width="3" height="3" fill="#c80000"/>
<rect x="616" y="391" width="3" height="2" fill="#c80000"/>
<rect x="620" y="393" width="3" height="1" fill="#c80000"/>
<rect x="624" y="393" width="3" height="2" fill="#c80000"/>
<rect x="628" y="393" width="3" height="1" fill="#00c400"/>
<rect x="632" y="393" width="3" height="1" fill="#c80000"/>
<rect x="635" y="393" width="3" height="2" fill="#c80000"/>
<rect x="639" y="393" width="3" height="3" fill="#c80000"/>
<rect x="643" y="393" width="3" height="3" fill="#c80000"/>
<rect x="647" y="393" width="3" height="2" fill="#00c400"/>
<rect x="651" y="393" width="3" height="1" fill="#00c400"/>
<rect x="663" y="393" width="3" height="1" fill="#c80000"/>
<rect x="667" y="393" width="3" height="2" fill="#c80000"/>
<rect x="671" y="393" width="3" height="3" fill="#c80000"/>
<rect x="675" y="393" width="3" height="5" fill="#c80000"/>
<rect x="679" y="393" width="3" height="5" fill="#c80000"/>
<rect x="683" y="393" width="3" height="7" fill="#c80000"/>
<rect x="687" y="393" width="3" height="10" fill="#c80000"/>
<rect x="691" y="393" width="3" height="11" fill="#c80000"/>
<rect x="695" y="393" width="3" height="12" fill="#c80000"/>
<rect x="699" y="393" width="3" height="12" fill="#00c400"/>
<rect x="703" y="393" width="3" height="11" fill="#00c400"/>
<rect x="707" y="393" width="3" height="8" fill="#00c400"/>
<rect x="711" y="393" width="3" height="5" fill="#00c400"/>
<rect x="715" y="393" width="3" height="3" fill="#00c400"/>
<rect x="719" y="393" width="3" height="2" fill="#00c400"/>
<rect x="723" y="393" width="3" height="1" fill="#00c400"/>
<rect x="727" y="393" width="3" height="1" fill="#00c400"/>
<rect x="735" y="390" width="3" height="3" fill="#00c400"/>
<rect x="739" y="386" width="3" height="7" fill="#00c400"/>
<rect x="743" y="380" width="3" height="13" fill="#00c400"/>
<rect x="747" y="373" width="3" height="20" fill="#00c400"/>
<rect x="751" y="365" width="3" height="28" fill="#00c400"/>
<rect x="755" y="358" width="3" height="35" fill="#00c400"/>
<rect x="759" y="353" width="3" height="40" fill="#00c400"/>
<rect x="763" y="352" width="3" height="41" fill="#00c400"/>
<rect x="767" y="351" width="3" height="42" fill="#00c400"/>
<rect x="771" y="352" width="3" height="41" fill="#c80000"/>
<rect x="775" y="355" width="3" height="38" fill="#c80000"/>
<rect x="779" y="358" width="3" height="35" fill="#c80000"/>
<rect x="783" y="360" width="3" height="33" fill="#c80000"/>
<rect x="787" y="362" width="3" height="31" fill="#c80000"/>
<rect x="791" y="361" width="3" height="32" fill="#00c400"/>
<rect x="795" y="362" width="3" height="31" fill="#c80000"/>
<rect x="799" y="362" width="3" height="31" fill="#c80000"/>
<rect x="803" y="362" width="3" height="31" fill="#00c400"/>
<rect x="807" y="363" width="3" height="30" fill="#c80000"/>
<rect x="811" y="364" width="3" height="29" fill="#c80000"/>
<rect x="815" y="361" width="3" height="32" fill="#00c400"/>
<rect x="819" y="356" width="3" height="37" fill="#00c400"/>
<rect x="823" y="352" width="3" height="41" fill="#00c400"/>
<rect x="827" y="347" width="3" height="46" fill="#00c400"/>
<rect x="831" y="343" width="3" height="50" fill="#00c400"/>
<rect x="835" y="340" width="3" height="53" fill="#00c400"/>
<rect x="631" y="266" width="238" height="42" fill="#fff" fill-opacity=".125"/>
<rect x="26" y="337" width="166" height="17" fill="#fff" fill-opacity=".125"/>
<path d="M24.5 330.5V44.5H883.5M24.5 330.5H883.5" fill="none" stroke="#5c5c5c"/>
<path d="M883.5 44V331" fill="none" stroke="#828282"/>
<path d="M24.5 431.5V335.5H883.5M24.5 431.5H883.5" fill="none" stroke="#5c5c5c"/>
<path d="M883.5 335V432" fill="none" stroke="#828282"/>
<line x1="47.5" y1="432" x2="47.5" y2="434" stroke="#8c8c8c"/>
<line x1="131.5" y1="432" x2="131.5" y2="434" stroke="#8c8c8c"/>
<line x1="223.5" y1="432" x2="223.5" y2="434" stroke="#8c8c8c"/>
<line x1="307.5" y1="432" x2="307.5" y2="434" stroke="#8c8c8c"/>
<line x1="395.5" y1="432" x2="395.5" y2="434" stroke="#8c8c8c"/>
<line x1="482.5" y1="432" x2="482.5" y2="434" stroke="#8c8c8c"/>
<line x1="562.5" y1="432" x2="562.5" y2="434" stroke="#8c8c8c"/>
<line x1="650.5" y1="432" x2="650.5" y2="434" stroke="#8c8c8c"/>
<line x1="734.5" y1="432" x2="734.5" y2="434" stroke="#8c8c8c"/>
<line x1="838.5" y1="432" x2="838.5" y2="453" stroke="#8c8c8c"/>
<rect x="4" y="459" width="952" height="16" fill="#1e1e1e"/>
<rect x="495" y="459" width="442" height="16" fill="#303030"/><rect x="495" y="459" width="442" height="1" fill="#3c3c3c"/>
<rect x="491" y="459" width="4" height="1" fill="#f0f0f0"/><rect x="491" y="460" width="2" height="15" fill="#fff"/><rect x="493" y="460" width="1" height="15" fill="#000"/><rect x="494" y="460" width="1" height="15" fill="#b4b4b4"/>
<rect x="937" y="459" width="1" height="16" fill="#000"/><rect x="938" y="459" width="2" height="16" fill="#fff"/><rect x="940" y="460" width="1" height="15" fill="#000"/><rect x="938" y="459" width="3" height="1" fill="#f0f0f0"/>
<rect x="161" y="459" width="1" height="3" fill="#8c8c8c"/>
<rect x="301" y="459" width="1" height="3" fill="#8c8c8c"/>
<rect x="447" y="459" width="1" height="3" fill="#8c8c8c"/>
<rect x="594" y="459" width="1" height="3" fill="#8c8c8c"/>
<rect x="737" y="459" width="1" height="3" fill="#8c8c8c"/>
<rect x="880" y="459" width="1" height="3" fill="#8c8c8c"/>
</svg>
<svg width="957" height="475" viewBox="0 0 957 475" style="position:absolute;left:0;top:0;will-change:transform" text-rendering="geometricPrecision">
<defs>
<linearGradient id="gA" x1="0" y1="0" x2="0" y2="1"><stop offset="0" stop-color="#dcdc50"/><stop offset=".45" stop-color="#bcbc14"/><stop offset="1" stop-color="#8a8a00"/></linearGradient>
<linearGradient id="gB" x1="0" y1="0" x2="0" y2="1"><stop offset="0" stop-color="#6a6aff"/><stop offset=".4" stop-color="#0808ff"/><stop offset="1" stop-color="#0000d8"/></linearGradient>
<linearGradient id="gS" x1="0" y1="0" x2="0" y2="1"><stop offset="0" stop-color="#ff6a6a"/><stop offset=".4" stop-color="#ff0808"/><stop offset="1" stop-color="#d80000"/></linearGradient>
<linearGradient id="gT" x1="0" y1="0" x2="0" y2="1"><stop offset="0" stop-color="#a6cedc"/><stop offset="1" stop-color="#5a94b2"/></linearGradient>
<linearGradient id="gBar" x1="0" y1="0" x2="1" y2="0"><stop offset="0" stop-color="#1e3448"/><stop offset=".5" stop-color="#4c7a98"/><stop offset="1" stop-color="#1e3448"/></linearGradient>
<linearGradient id="gBtn" x1="0" y1="0" x2="1" y2="0"><stop offset="0" stop-color="#b8b8b8"/><stop offset=".45" stop-color="#f4f4f4"/><stop offset="1" stop-color="#a8a8a8"/></linearGradient>
<linearGradient id="gBtn2" x1="0" y1="0" x2="1" y2="0"><stop offset="0" stop-color="#c4c4c4"/><stop offset=".4" stop-color="#f4f4f4"/><stop offset="1" stop-color="#a0a0a0"/></linearGradient>
<radialGradient id="gD" cx=".4" cy=".35" r=".7"><stop offset="0" stop-color="#7cb484"/><stop offset="1" stop-color="#4e8a58"/></radialGradient>
</defs>
<text transform="translate(13.20,14.50) scale(1.1116,1)" font-family="Liberation Sans" font-size="12.3" font-weight="bold" fill="#fff">MGC</text>
<text transform="translate(49.00,14.50) scale(1.2344,1)" font-family="Liberation Sans" font-size="12.5" fill="#fff" stroke="#fff" stroke-width=".45">∞</text>
<text transform="translate(65.00,14.50) scale(1.2103,1)" font-family="Liberation Sans" font-size="10.4" font-weight="bold" fill="#fff">Jun26'24 @COMEX</text>
<path d="M181.6 8H190.8L186.2 13.4Z" fill="#fff"/>
<text transform="translate(207.80,14.60) scale(1.1986,1)" font-family="Liberation Sans" font-size="12.4" font-weight="bold" fill="#fff">Daily candles</text>
<path d="M306 8.2H315.1L310.55 12.9Z" fill="#fff"/>
<text transform="translate(327.30,14.50) scale(1.0010,1)" font-family="Liberation Sans" font-size="12.4" fill="#a2a2a2">File</text>
<rect x="327.3" y="16" width="7" height="1" fill="#a2a2a2"/>
<text transform="translate(361.40,14.50) scale(1.1045,1)" font-family="Liberation Sans" font-size="12.4" fill="#a2a2a2">Edit</text>
<rect x="361.4" y="16" width="8" height="1" fill="#a2a2a2"/>
<text transform="translate(399.20,14.50) scale(1.0730,1)" font-family="Liberation Sans" font-size="12.4" fill="#a2a2a2">View</text>
<rect x="399.2" y="16" width="8" height="1" fill="#a2a2a2"/>
<g transform="translate(860.6,10.4)"><circle r="4" fill="none" stroke="#767676" stroke-width="2.6"/><circle r="5.5" fill="none" stroke="#767676" stroke-width="2" stroke-dasharray="2.88 2.88" transform="rotate(-105)"/></g>
<g fill="none" stroke="#e2c24a" stroke-width="1.5"><rect x="-4.6" y="-2.5" width="9.2" height="5" rx="2.5" transform="translate(885,6.8) rotate(-45)"/><rect x="-4.6" y="-2.5" width="9.2" height="5" rx="2.5" transform="translate(878.4,13.6) rotate(-45)"/><path d="M879.6 12.4L883.8 8.2"/></g>
<path d="M897 6.9H907.3L902.15 12.9Z" fill="#8a8a8a"/>
<path d="M917.6 8.8V5.7H921M924.4 5.7H927.7V8.8M927.7 12V15.1H924.4M921 15.1H917.6V12" fill="none" stroke="#8c8c8c" stroke-width="1.5"/>
<path d="M938.6 5.5L948.8 15.6M948.8 5.5L938.6 15.6" stroke="#8c8c8c" stroke-width="1.25"/>
<path d="M8 31.6L14.3 37.7M14.3 31.6L8 37.7" stroke="#944a4a" stroke-width="2.5"/>
<rect x="20.5" y="26.5" width="13" height="13" fill="none" stroke="#4c2828" shape-rendering="crispEdges"/>
<path d="M27 27.5l1.6 2.5h-3.2zM27 38.6l1.6-2.5h-3.2zM21.6 33l2.5-1.6v3.2zM32.6 33l-2.5-1.6v3.2z" fill="#ac5454"/>
<rect x="42.30" y="27.40" width="3" height="2.9" fill="#fff"/>
<rect x="46.65" y="27.40" width="3" height="2.9" fill="#e6e6e6"/>
<rect x="51.00" y="27.40" width="3" height="2.9" fill="#fff"/>
<rect x="42.30" y="31.60" width="3" height="2.9" fill="#e6e6e6"/>
<rect x="46.65" y="31.60" width="3" height="2.9" fill="#fff"/>
<rect x="51.00" y="31.60" width="3" height="2.9" fill="#e6e6e6"/>
<rect x="42.30" y="35.80" width="3" height="2.9" fill="#fff"/>
<rect x="46.65" y="35.80" width="3" height="2.9" fill="#e6e6e6"/>
<rect x="51.00" y="35.80" width="3" height="2.9" fill="#fff"/>
<circle cx="69.3" cy="32.8" r="6.2" fill="#dde6f0" stroke="#aab6c6" stroke-width=".5"/>
<path d="M66.8 29.6L69.3 32.8L72 29.8" fill="none" stroke="#1a1a1a" stroke-width="1.2"/>
<path d="M62.6 39.3L63 35.6L65.8 34L70 35L68.4 36.6L66.4 36.4L65.8 39.3Z" fill="#b08868"/>
<circle cx="89.8" cy="32.8" r="6.5" fill="#c6c6c6"/><path d="M87.2 29.8L89.8 32.8L92.2 30.6" fill="none" stroke="#b0b0b0" stroke-width="1.2"/><path d="M92 36l3.4 2.4-2.6.2z" fill="#c6c6c6"/>
<rect x="105.3" y="28" width="11.7" height="10.7" fill="#ccd6d6"/>
<rect x="107.8" y="30.4" width="1.4" height="1.3" fill="#6aa46a"/>
<rect x="111.3" y="29.599999999999998" width="1.4" height="1.3" fill="#5674a4"/>
<rect x="114.3" y="29.2" width="1.4" height="1.3" fill="#5674a4"/>
<rect x="106.5" y="33.4" width="1.4" height="1.3" fill="#5674a4"/>
<rect x="109.8" y="32.9" width="1.4" height="1.3" fill="#5674a4"/>
<rect x="113.3" y="32.4" width="1.4" height="1.3" fill="#6aa46a"/>
<rect x="107.8" y="35.9" width="1.4" height="1.3" fill="#6aa46a"/>
<rect x="111.8" y="35.4" width="1.4" height="1.3" fill="#5674a4"/>
<rect x="114.5" y="35.6" width="1.4" height="1.3" fill="#6aa46a"/>
<circle cx="106.3" cy="28.3" r="2.9" fill="#3a783e"/><path d="M104.6 28.3h3.4M106.3 26.6v3.4" stroke="#fff" stroke-width="1.1"/>
<rect x="125" y="26" width="12.1" height="11.7" fill="#ececfa"/><circle cx="130.2" cy="31.4" r="3.9" fill="#a8d6f4" stroke="#8a9aac" stroke-width=".9"/><circle cx="129.2" cy="30.2" r="1.6" fill="#d6ecfa"/><path d="M133.4 34.8L138.2 39" stroke="#f0962a" stroke-width="1.9"/>
<path d="M152.8 27.7H164.6L158.7 39.2Z" fill="#fff"/>
<rect x="182.8" y="26.4" width="12.5" height="12.5" fill="url(#gT)"/>
<text x="189.05" y="36.4" text-anchor="middle" font-family="Liberation Serif" font-weight="bold" font-size="10.4" fill="#303438">T</text>
<rect x="203.7" y="26.4" width="12.5" height="12.5" fill="#e2e2ee"/>
<polyline points="204.5,34 206.5,31.8 208.5,32.4 210.5,29.8 212.5,30.4 215.5,27.4" fill="none" stroke="#b8a0d4" stroke-width=".9"/>
<polyline points="204.5,37.6 206.5,35.6 208.5,36.4 210.5,33.8 212.5,34.8 215.5,32.6" fill="none" stroke="#5878b8" stroke-width=".9"/>
<rect x="224.5" y="29" width="1.7" height="10" fill="#545492"/><rect x="223.4" y="31" width="1.2" height="1" fill="#5a5a98"/><rect x="226.2" y="35.5" width="1.2" height="1" fill="#5a5a98"/>
<rect x="228.4" y="26" width="1.7" height="7.6" fill="#548e6c"/><rect x="227.4" y="28" width="1.2" height="1" fill="#5a9672"/><rect x="230.2" y="31" width="1.2" height="1" fill="#5a9672"/>
<rect x="232.3" y="27" width="1.7" height="11.6" fill="#548e6c"/><rect x="231.2" y="35.4" width="1.2" height="1" fill="#5a9672"/><rect x="234" y="29" width="1.2" height="1" fill="#5a9672"/>
<rect x="235.6" y="30" width="1.8" height="7" fill="#5a5aa2"/><rect x="237.2" y="35.6" width="1.2" height="1" fill="#5a5aa2"/>
<rect x="245.8" y="37" width="1.6" height="2.6" fill="#4a78a2"/>
<rect x="248.2" y="35" width="1.6" height="4.6" fill="#4a78a2"/>
<rect x="250.6" y="33" width="1.6" height="6.6" fill="#4a78a2"/>
<rect x="253" y="31" width="1.6" height="8.6" fill="#4a78a2"/>
<rect x="255.4" y="33" width="1.6" height="6.6" fill="#4a78a2"/>
<rect x="257.8" y="35.4" width="1.6" height="4.2" fill="#4a78a2"/>
<circle cx="273" cy="32.8" r="6.1" fill="url(#gD)"/><text x="273" y="36.2" text-anchor="middle" font-family="Liberation Sans" font-weight="bold" font-size="9.6" fill="#fff">S</text><path d="M273 28.2V37.4" stroke="#fff" stroke-width=".8"/>
<path d="M286.2 33L298.6 25.3" stroke="#5e7a90" stroke-width="1.1"/>
<path d="M294.5 30.4V38.8L296.4 37L297.9 40.2L299.2 39.6L297.7 36.5L300.2 36.3Z" fill="#e4e4e4" stroke="#8a8a8a" stroke-width=".5"/>
<path d="M315.7 33.2L321.09999999999997 38.5" stroke="#cacaca" stroke-width="2.3"/><circle cx="312.7" cy="30.2" r="3.9" fill="#9c9c9c" stroke="#c0c0c0" stroke-width="1"/>
<path d="M336.6 33.2L342.0 38.5" stroke="#cacaca" stroke-width="2.3"/><circle cx="333.6" cy="30.2" r="3.9" fill="#9c9c9c" stroke="#c0c0c0" stroke-width="1"/>
<path d="M311 30.2h3.4M312.7 28.5v3.4" stroke="#c8c8c8" stroke-width=".8"/><path d="M331.9 30.2h3.4" stroke="#c8c8c8" stroke-width=".8"/>
<path d="M350 32.8H364.2M357.1 26V40" stroke="#846850" stroke-width="1.2" stroke-dasharray="1.5 .6"/>
<path d="M371.3 30.5L380.3 35.6L372.6 38.3Z" fill="#d2d2d2"/><path d="M377.2 34.2C377.3 30.8 380 28.9 382.2 29.8C384.8 30.9 385.2 34 383.2 37" fill="none" stroke="#d2d2d2" stroke-width="2.8"/>
<g transform="translate(777.4,0) scale(-1,1)"><path d="M371.3 30.5L380.3 35.6L372.6 38.3Z" fill="#d2d2d2"/><path d="M377.2 34.2C377.3 30.8 380 28.9 382.2 29.8C384.8 30.9 385.2 34 383.2 37" fill="none" stroke="#d2d2d2" stroke-width="2.8"/></g>
<path d="M419.9 30.3H414.3V35.8H419.9M419.5 27.5L425.1 33L419.5 38.5" fill="none" stroke="#1e7ceb" stroke-width="1.1"/>
<path d="M440.7 27.3H452.6L446.65 38.9Z" fill="#fff"/>
<rect x="475.1" y="25.1" width="4.1" height="15.5" fill="url(#gBar)"/><path d="M470.3 33L474.3 30V36ZM484 33L480 30V36Z" fill="#9cc49c"/>
<rect x="497.1" y="25.1" width="2.2" height="15.5" fill="#2e5470"/><path d="M496 33L492 30V36ZM500.4 33L504.4 30V36Z" fill="#9cc49c"/>
<g stroke="#b8b8b8" fill="none"><path d="M515.2 30L522.6 36.6" stroke-width="3.2"/><path d="M512.6 29.8A2.3 2.3 0 1 0 515.4 27.2" stroke-width="2"/><path d="M525.2 36.8A2.3 2.3 0 1 0 522.4 39" stroke-width="2"/></g>
<path d="M531.8 30.2H540.3L536.05 35.8Z" fill="#fff"/>
<rect x="828.2" y="23.3" width="46.4" height="18.6" rx="5.5" fill="url(#gA)"/>
<rect x="875.6" y="23.3" width="39.8" height="18.6" rx="5.5" fill="url(#gB)"/>
<rect x="916.5" y="23.3" width="39.2" height="18.6" rx="5.5" fill="url(#gS)"/>
<text transform="translate(837.30,36.70) scale(1.1144,1)" font-family="Liberation Sans" font-size="12.7" fill="#1c1c00">Alert</text>
<text transform="translate(884.40,36.70) scale(1.0053,1)" font-family="Liberation Sans" font-size="12.7" fill="#fff">Buy</text>
<text transform="translate(925.20,36.70) scale(1.0294,1)" font-family="Liberation Sans" font-size="12.7" fill="#fff">Sell</text>
<path d="M29.6 49.6L34.8 54.8M34.8 49.6L29.6 54.8" stroke="#8e4646" stroke-width="1.5"/>
<text transform="translate(37.70,59.30) scale(0.9786,1)" font-family="Liberation Sans" font-size="14.2" fill="#fff">L: 2346.80 CH: +1.40 CH%: 0.06%</text>
<text transform="translate(888.80,62.80) scale(1.1141,1)" font-family="Liberation Sans" font-size="14.7" fill="#fff" stroke="#000" stroke-width=".22">2400.00</text>
<text transform="translate(888.80,85.80) scale(1.1141,1)" font-family="Liberation Sans" font-size="14.7" fill="#fff" stroke="#000" stroke-width=".22">2350.00</text>
<text transform="translate(888.80,107.80) scale(1.1141,1)" font-family="Liberation Sans" font-size="14.7" fill="#fff" stroke="#000" stroke-width=".22">2300.00</text>
<text transform="translate(888.80,130.80) scale(1.1141,1)" font-family="Liberation Sans" font-size="14.7" fill="#fff" stroke="#000" stroke-width=".22">2250.00</text>
<text transform="translate(888.80,152.80) scale(1.1141,1)" font-family="Liberation Sans" font-size="14.7" fill="#fff" stroke="#000" stroke-width=".22">2200.00</text>
<text transform="translate(888.80,175.80) scale(1.1141,1)" font-family="Liberation Sans" font-size="14.7" fill="#fff" stroke="#000" stroke-width=".22">2150.00</text>
<text transform="translate(888.80,197.80) scale(1.1141,1)" font-family="Liberation Sans" font-size="14.7" fill="#fff" stroke="#000" stroke-width=".22">2100.00</text>
<text transform="translate(888.80,219.80) scale(1.1141,1)" font-family="Liberation Sans" font-size="14.7" fill="#fff" stroke="#000" stroke-width=".22">2050.00</text>
<text transform="translate(888.80,242.80) scale(1.1141,1)" font-family="Liberation Sans" font-size="14.7" fill="#fff" stroke="#000" stroke-width=".22">2000.00</text>
<text transform="translate(888.80,264.80) scale(1.1141,1)" font-family="Liberation Sans" font-size="14.7" fill="#fff" stroke="#000" stroke-width=".22">1950.00</text>
<text transform="translate(888.80,287.80) scale(1.1141,1)" font-family="Liberation Sans" font-size="14.7" fill="#fff" stroke="#000" stroke-width=".22">1900.00</text>
<text transform="translate(888.80,309.80) scale(1.1141,1)" font-family="Liberation Sans" font-size="14.7" fill="#fff" stroke="#000" stroke-width=".22">1850.00</text>
<text transform="translate(889.20,359.80) scale(1.1009,1)" font-family="Liberation Sans" font-size="14.7" fill="#fff" stroke="#000" stroke-width=".22">100</text>
<text transform="translate(889.20,398.80) scale(1.1009,1)" font-family="Liberation Sans" font-size="14.7" fill="#fff" stroke="#000" stroke-width=".22">0</text>
<path d="M883.2 81.6L888.2 77V75.2Q888.2 73.2 890.2 73.2H948Q950 73.2 950 75.2V88Q950 90 948 90H890.2Q888.2 90 888.2 88V86.2Z" fill="#c8c43a"/>
<text transform="translate(889.80,87.10) scale(1.0878,1)" font-family="Liberation Sans" font-size="14.7" fill="#000">2346.80</text>
<text transform="translate(24.60,448.40) scale(1.0875,1)" font-family="Liberation Sans" font-size="14.6" fill="#fff" stroke="#000" stroke-width=".22">Jul '23</text>
<text transform="translate(104.00,448.40) scale(1.1210,1)" font-family="Liberation Sans" font-size="14.6" fill="#fff" stroke="#000" stroke-width=".22">Aug '23</text>
<text transform="translate(196.00,448.40) scale(1.1210,1)" font-family="Liberation Sans" font-size="14.6" fill="#fff" stroke="#000" stroke-width=".22">Sep '23</text>
<text transform="translate(281.00,448.40) scale(1.1573,1)" font-family="Liberation Sans" font-size="14.6" fill="#fff" stroke="#000" stroke-width=".22">Oct '23</text>
<text transform="translate(367.50,448.40) scale(1.1418,1)" font-family="Liberation Sans" font-size="14.6" fill="#fff" stroke="#000" stroke-width=".22">Nov '23</text>
<text transform="translate(456.00,448.40) scale(1.0806,1)" font-family="Liberation Sans" font-size="14.6" fill="#fff" stroke="#000" stroke-width=".22">Dec '23</text>
<text transform="translate(539.30,448.40) scale(1.0424,1)" font-family="Liberation Sans" font-size="14.6" fill="#fff" stroke="#000" stroke-width=".22">Jan '24</text>
<text transform="translate(624.00,448.40) scale(1.0986,1)" font-family="Liberation Sans" font-size="14.6" fill="#fff" stroke="#000" stroke-width=".22">Feb '24</text>
<text transform="translate(707.75,448.40) scale(1.1093,1)" font-family="Liberation Sans" font-size="14.6" fill="#fff" stroke="#000" stroke-width=".22">Mar '24</text>
<path d="M500.5 431.4L504.9 435.2H537Q539.7 435.2 539.7 438V448.8Q539.7 451.5 537 451.5H465.2Q462.5 451.5 462.5 448.8V438Q462.5 435.2 465.2 435.2H496.2Z" fill="#c8c43a"/>
<text transform="translate(465.60,448.40) scale(1.1085,1)" font-family="Liberation Sans" font-size="14.6" fill="#000">12/6/2023</text>
<path d="M841 444.4L844.2 441.4V443.3H847V445.5H844.2V447.4Z" fill="#8c8c8c"/>
<text transform="translate(639.30,281.70) scale(1.0643,1)" font-family="Liberation Sans" font-size="11.8" font-weight="bold" fill="#fff">MGC</text>
<text transform="translate(673.40,281.70) scale(1.3466,1)" font-family="Liberation Sans" font-size="12.5" fill="#fff">∞</text>
<text transform="translate(689.60,281.70) scale(1.1600,1)" font-family="Liberation Sans" font-size="11.8" font-weight="bold" fill="#fff">JUN'24 Futures@COMEX</text>
<rect x="640" y="296" width="17" height="2" fill="#1ea0f0"/>
<text transform="translate(661.40,301.70) scale(1.0551,1)" font-family="Liberation Sans" font-size="12.3" fill="#fff">SMA(55)</text>
<rect x="717.5" y="293.5" width="8.6" height="8.6" fill="#000"/><rect x="718" y="294" width="8" height="8" fill="#f6f4ff"/><path d="M719.3 297.4L721.4 299.8L724.8 295.8" fill="none" stroke="#1464e6" stroke-width="1.6"/>
<g transform="translate(731,293.7)"><circle cx="4.1" cy="4.3" r="4.1" fill="#000"/><path d="M4 .9L6.8 .6Q8 2 7.6 4L8 8L5.4 8L4.4 7Q2 7.4 1 5.6Q.6 4 1 3L2.8 3.2Q3 4.6 4.2 4.4Q5.2 3.8 4.4 2.4Z" fill="#a2cdf4"/></g>
<g transform="translate(858.2,273.2)"><circle cx="4.1" cy="4.3" r="4.1" fill="#000"/><path d="M4 .9L6.8 .6Q8 2 7.6 4L8 8L5.4 8L4.4 7Q2 7.4 1 5.6Q.6 4 1 3L2.8 3.2Q3 4.6 4.2 4.4Q5.2 3.8 4.4 2.4Z" fill="#a2cdf4"/></g>
<text transform="translate(34.70,350.80) scale(1.1034,1)" font-family="Liberation Sans" font-size="12.5" font-weight="bold" fill="#fff">Awesome Oscillator</text>
<g transform="translate(181.6,343.2)"><circle cx="4.1" cy="4.3" r="4.1" fill="#000"/><path d="M4 .9L6.8 .6Q8 2 7.6 4L8 8L5.4 8L4.4 7Q2 7.4 1 5.6Q.6 4 1 3L2.8 3.2Q3 4.6 4.2 4.4Q5.2 3.8 4.4 2.4Z" fill="#a2cdf4"/></g>
<path d="M10.6 338L18.4 346.2M18.4 338L10.6 346.2" stroke="#d0d0d0" stroke-width="2.4"/>
<rect x="10.9" y="300.4" width="2.6" height="11.2" fill="#2e8ad8"/><path d="M9.2 300.3h6v1.7h-6zM9.2 310h6v1.7h-6z" fill="#3c96e0"/><path d="M14.4 306H21M14.6 306l2.8-2.2M14.6 306l2.8 2.2" stroke="#18a838" stroke-width="1.1" fill="none"/>
<rect x="7" y="322" width="1" height="8" fill="#d0d0d0" shape-rendering="crispEdges"/>
<rect x="10" y="319" width="1" height="11" fill="#d0d0d0" shape-rendering="crispEdges"/>
<rect x="14" y="317" width="1" height="13" fill="#d0d0d0" shape-rendering="crispEdges"/>
<rect x="18" y="321" width="1" height="9" fill="#d0d0d0" shape-rendering="crispEdges"/>
<rect x="21" y="324" width="1" height="6" fill="#d0d0d0" shape-rendering="crispEdges"/>
<path d="M4 459H19V475H8L4 471Z" fill="url(#gBtn)"/><path d="M7 467L14 462.6V471.2Z" fill="#0a1a30"/>
<path d="M941 459H956V471L952 475H941Z" fill="url(#gBtn2)"/><path d="M953 467L946 462.6V471.2Z" fill="#0a1a30"/>
<text transform="translate(20.00,471.80) scale(1.0000,1)" font-family="Liberation Serif" font-size="12" fill="#8a8a8a">Aug '22</text>
<text transform="translate(162.70,471.80) scale(1.0000,1)" font-family="Liberation Serif" font-size="12" fill="#8a8a8a">Nov '22</text>
<text transform="translate(303.20,471.80) scale(1.0000,1)" font-family="Liberation Serif" font-size="12" fill="#8a8a8a">Feb '23</text>
<text transform="translate(449.20,471.80) scale(1.0000,1)" font-family="Liberation Serif" font-size="12" fill="#8a8a8a">May '23</text>
<text transform="translate(596.40,471.80) scale(1.0000,1)" font-family="Liberation Serif" font-size="12" fill="#8a8a8a">Aug '23</text>
<text transform="translate(739.00,471.80) scale(1.0000,1)" font-family="Liberation Serif" font-size="12" fill="#8a8a8a">Nov '23</text>
<text transform="translate(882.40,471.80) scale(1.0000,1)" font-family="Liberation Serif" font-size="12" fill="#8a8a8a">Feb '24</text>
</svg>
</body></html>
